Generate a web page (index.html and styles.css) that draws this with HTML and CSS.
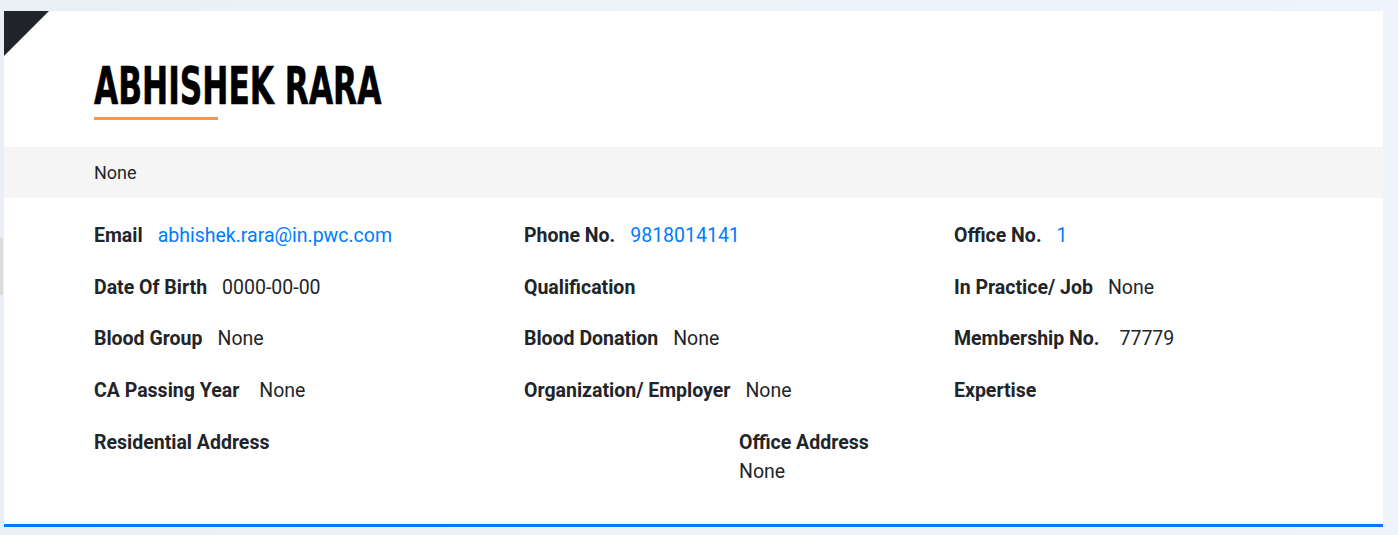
FILE: index.html
```html
<!DOCTYPE html>
<html lang="en">
<head>
<meta charset="utf-8">
<title>Profile</title>
<link rel="stylesheet" href="styles.css">
</head>
<body>
<div class="edge-tab"></div>
<div class="card">
  <div class="corner"></div>
  <div class="head">
    <h1 class="name">ABHISHEK RARA</h1>
    <div class="underline"></div>
  </div>
  <div class="band">None</div>
  <div class="details">
    <div class="grid">
      <div class="item"><span class="label">Email</span><a class="link" href="#">abhishek.rara@in.pwc.com</a></div>
      <div class="item"><span class="label">Phone No.</span><a class="link" href="#">9818014141</a></div>
      <div class="item"><span class="label">Office No.</span><a class="link" href="#">1</a></div>

      <div class="item"><span class="label">Date Of Birth</span><span class="value">0000-00-00</span></div>
      <div class="item"><span class="label">Qualification</span></div>
      <div class="item"><span class="label">In Practice/ Job</span><span class="value">None</span></div>

      <div class="item"><span class="label">Blood Group</span><span class="value">None</span></div>
      <div class="item"><span class="label">Blood Donation</span><span class="value">None</span></div>
      <div class="item"><span class="label wide">Membership No.</span><span class="value">77779</span></div>

      <div class="item"><span class="label wide">CA Passing Year</span><span class="value">None</span></div>
      <div class="item"><span class="label">Organization/ Employer</span><span class="value">None</span></div>
      <div class="item"><span class="label">Expertise</span></div>
    </div>
    <div class="address-row">
      <div class="address"><div class="label">Residential Address</div></div>
      <div class="address"><div class="label">Office Address</div><div class="value">None</div></div>
    </div>
  </div>
</div>
</body>
</html>
```
FILE: styles.css
```css
html, body {
  margin: 0;
  padding: 0;
}
body {
  background: linear-gradient(90deg, #eaeef5 0%, #eef2f9 50%, #eef3fc 100%);
  font-family: Roboto, "Liberation Sans", sans-serif;
  color: #212529;
  padding: 11px 15px 8px 4px;
  position: relative;
}
.edge-tab {
  position: absolute;
  left: 0;
  top: 238px;
  width: 3px;
  height: 57px;
  background: #dcdcdc;
}
.card {
  position: relative;
  background: #fff;
  border-bottom: 3px solid #007bff;
  height: 516px;
  box-sizing: border-box;
}
.corner {
  position: absolute;
  left: 0;
  top: 0;
  width: 0;
  height: 0;
  border-top: 45px solid #212529;
  border-right: 45px solid transparent;
}
.head {
  padding: 48px 90px 27px;
}
.name {
  margin: 0;
  font-family: "DejaVu Sans Condensed", "DejaVu Sans", sans-serif;
  font-weight: bold;
  font-size: 51px;
  line-height: 56px;
  color: #000;
  transform: scaleX(0.681);
  transform-origin: left center;
  white-space: nowrap;
  letter-spacing: 0;
  -webkit-text-stroke: 0.6px #000;
}
.underline {
  width: 124px;
  height: 3px;
  background: #f7964f;
  margin-top: 2px;
}
.band {
  background: #f5f5f5;
  height: 51px;
  padding-left: 90px;
  display: flex;
  align-items: center;
  font-size: 18px;
}
.details {
  padding: 26px 90px 0;
}
.grid {
  display: grid;
  grid-template-columns: 430px 430px 1fr;
  row-gap: 27.7px;
}
.item {
  display: flex;
  align-items: baseline;
  font-size: 19.5px;
  line-height: 24px;
  white-space: nowrap;
}
.label {
  font-weight: bold;
  margin-right: 15px;
}
.label.wide {
  margin-right: 20px;
}
.value {
  font-weight: normal;
}
.link {
  color: #007bff;
  text-decoration: none;
}
.address-row {
  display: grid;
  grid-template-columns: 645px 1fr;
  margin-top: 27.7px;
  font-size: 19.5px;
  line-height: 24px;
}
.address .label {
  margin-right: 0;
}
.address .value {
  margin-top: 5px;
}
```
